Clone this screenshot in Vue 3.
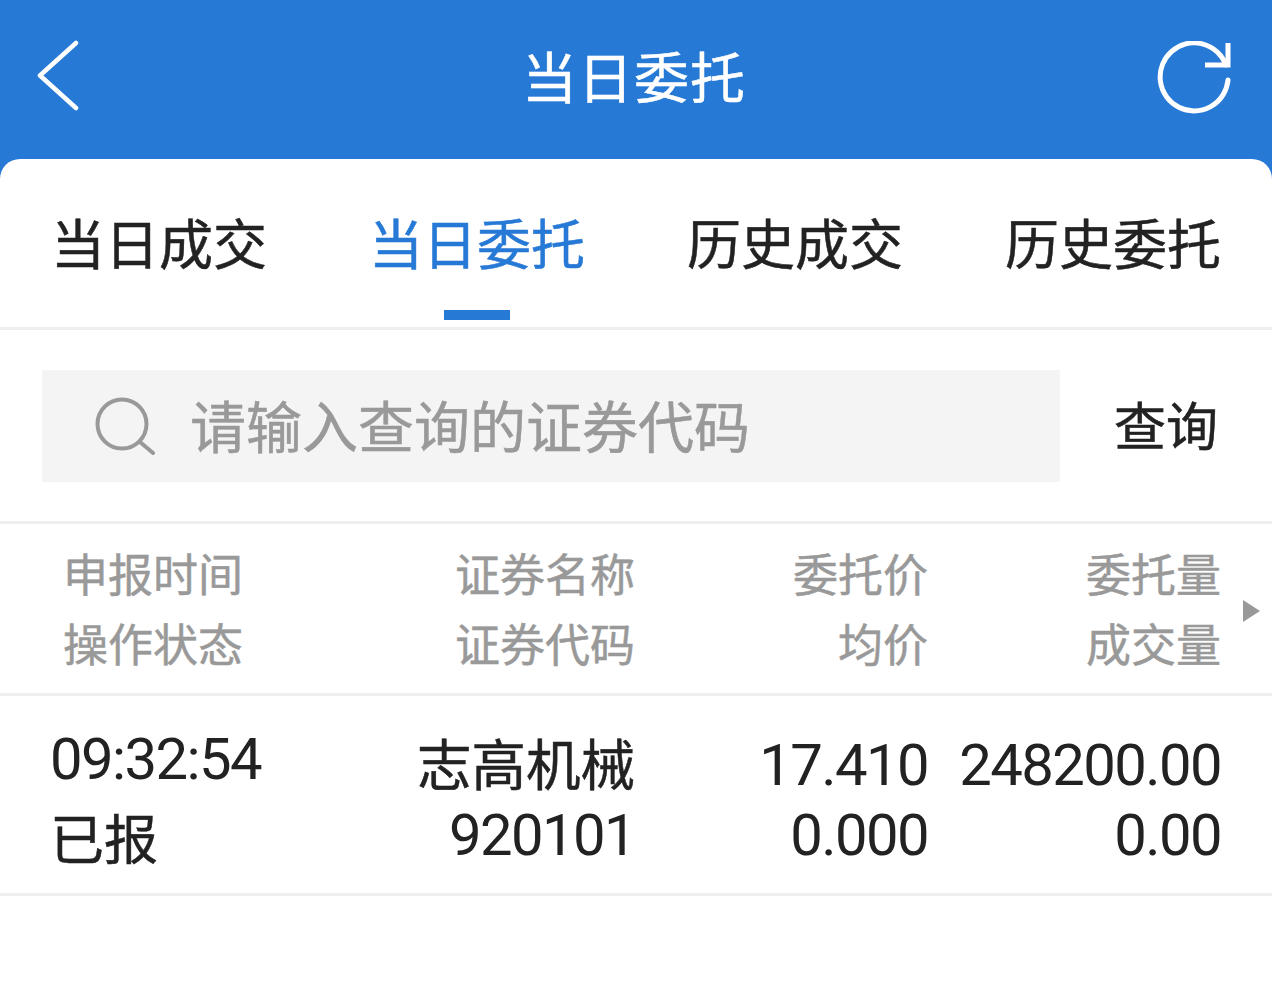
<script setup>
const tabs = [
  { label: '当日成交' },
  { label: '当日委托', active: true },
  { label: '历史成交' },
  { label: '历史委托' }
]
</script>

<template>
  <div class="page">
    <header class="topbar">
      <svg class="back" width="44" height="72" viewBox="0 0 44 72" fill="none">
        <path d="M39 3 L3 35.500 L39 68" stroke="#fff" stroke-width="4.500" stroke-linecap="round" stroke-linejoin="round" />
      </svg>
      <h1 class="title">当日委托</h1>
      <svg class="refresh" width="76" height="76" viewBox="0 0 76 76" fill="none">
        <path d="M71 39 A34 34 0 1 1 69 24" stroke="#fff" stroke-width="5" stroke-linecap="round" />
        <path d="M48 24 H71 V2" stroke="#fff" stroke-width="5" />
      </svg>
    </header>

    <main class="sheet">
      <nav class="tabs">
        <div v-for="tab in tabs" :key="tab.label" class="tab" :class="{ active: tab.active }">
          {{ tab.label }}
          <span v-if="tab.active" class="ink"></span>
        </div>
      </nav>

      <section class="search">
        <div class="field">
          <svg class="lens" width="62" height="58" viewBox="0 0 62 58" fill="none">
            <circle cx="28" cy="27" r="24.500" stroke="#999" stroke-width="4" />
            <path d="M46 45 L59 56" stroke="#999" stroke-width="4" stroke-linecap="round" />
          </svg>
          <span class="hint">请输入查询的证券代码</span>
        </div>
        <span class="query">查询</span>
      </section>

      <section class="thead">
        <div class="c center"><span>申报时间</span><span>操作状态</span></div>
        <div class="c"><span>证券名称</span><span>证券代码</span></div>
        <div class="c"><span>委托价</span><span>均价</span></div>
        <div class="c"><span>委托量</span><span>成交量</span></div>
        <i class="arrow"></i>
      </section>

      <section class="row">
        <div class="c first"><span class="time num">09:32:54</span><span class="status">已报</span></div>
        <div class="c"><span class="name">志高机械</span><span class="num">920101</span></div>
        <div class="c"><span class="num">17.410</span><span class="num">0.000</span></div>
        <div class="c"><span class="num">248200.00</span><span class="num">0.00</span></div>
      </section>
    </main>
  </div>
</template>

<style>
html, body { margin: 0; background: #fff; }
</style>

<style scoped>
.page {
  width: 1272px;
  height: 990px;
  overflow: hidden;
  background: #2779d6;
  font-family: "Noto Sans CJK SC", "Noto Sans", sans-serif;
  -webkit-text-stroke: 0.5px currentColor;
}
.topbar {
  height: 159px;
  position: relative;
  display: flex;
  justify-content: center;
  color: #fff;
}
.title {
  margin: 0 4px 0 0;
  font-size: 55px;
  font-weight: 400;
  line-height: 148px;
  letter-spacing: 1px;
}
.back { position: absolute; left: 37px; top: 40px; }
.refresh { position: absolute; left: 1157px; top: 41px; }
.sheet {
  height: 831px;
  background: #fff;
  border-radius: 20px 20px 0 0;
}
.tabs {
  display: grid;
  grid-template-columns: repeat(4, 318px);
  height: 168px;
  border-bottom: 3px solid #eeeeee;
}
.tab {
  position: relative;
  text-align: center;
  font-size: 54px;
  line-height: 166px;
  color: #222;
}
.tab.active { color: #2779d6; }
.ink {
  position: absolute;
  left: 126px;
  top: 151px;
  width: 66px;
  height: 10px;
  background: #2779d6;
}
.search {
  height: 194px;
  box-sizing: border-box;
  border-bottom: 3px solid #eeeeee;
  padding: 40px 0 0 42px;
  display: flex;
  align-items: flex-start;
}
.field {
  width: 1018px;
  height: 112px;
  background: #f4f4f4;
  display: flex;
  align-items: center;
  padding-left: 52px;
  box-sizing: border-box;
}
.lens { margin-right: 34px; flex: none; }
.hint {
  font-size: 56px;
  color: #999;
  line-height: 108px;
  height: 112px;
}
.query {
  margin-left: 54px;
  font-size: 52px;
  line-height: 108px;
  color: #222;
}
.thead, .row {
  display: grid;
  grid-template-columns: 306px 329px 293px 293px;
  position: relative;
}
.thead {
  height: 155px;
  padding-top: 14px;
  border-bottom: 3px solid #eeeeee;
  color: #999;
  font-size: 45px;
  line-height: 70px;
}
.row {
  height: 197px;
  border-bottom: 3px solid #eeeeee;
  color: #222;
  font-size: 54.500px;
  line-height: 70px;
  align-items: center;
}
.c { display: flex; flex-direction: column; align-items: flex-end; white-space: nowrap; }
.center { align-items: center; }
.first { align-items: flex-start; padding-left: 50px; }
.num {
  font-family: Roboto, "Noto Sans", sans-serif;
  font-size: 58px;
  letter-spacing: -1.600px;
  -webkit-text-stroke: 0;
  padding-top: 5px;
  margin-bottom: -5px;
}
.name { padding-top: 2px; margin-bottom: -2px; }
.time { line-height: 82px; padding-top: 6px; margin-bottom: -6px; }
.status { line-height: 82px; font-size: 54px; padding-top: 2px; }
.arrow {
  position: absolute;
  left: 1243px;
  top: 76px;
  width: 0;
  height: 0;
  border-left: 17px solid #999;
  border-top: 11px solid transparent;
  border-bottom: 11px solid transparent;
}
</style>
